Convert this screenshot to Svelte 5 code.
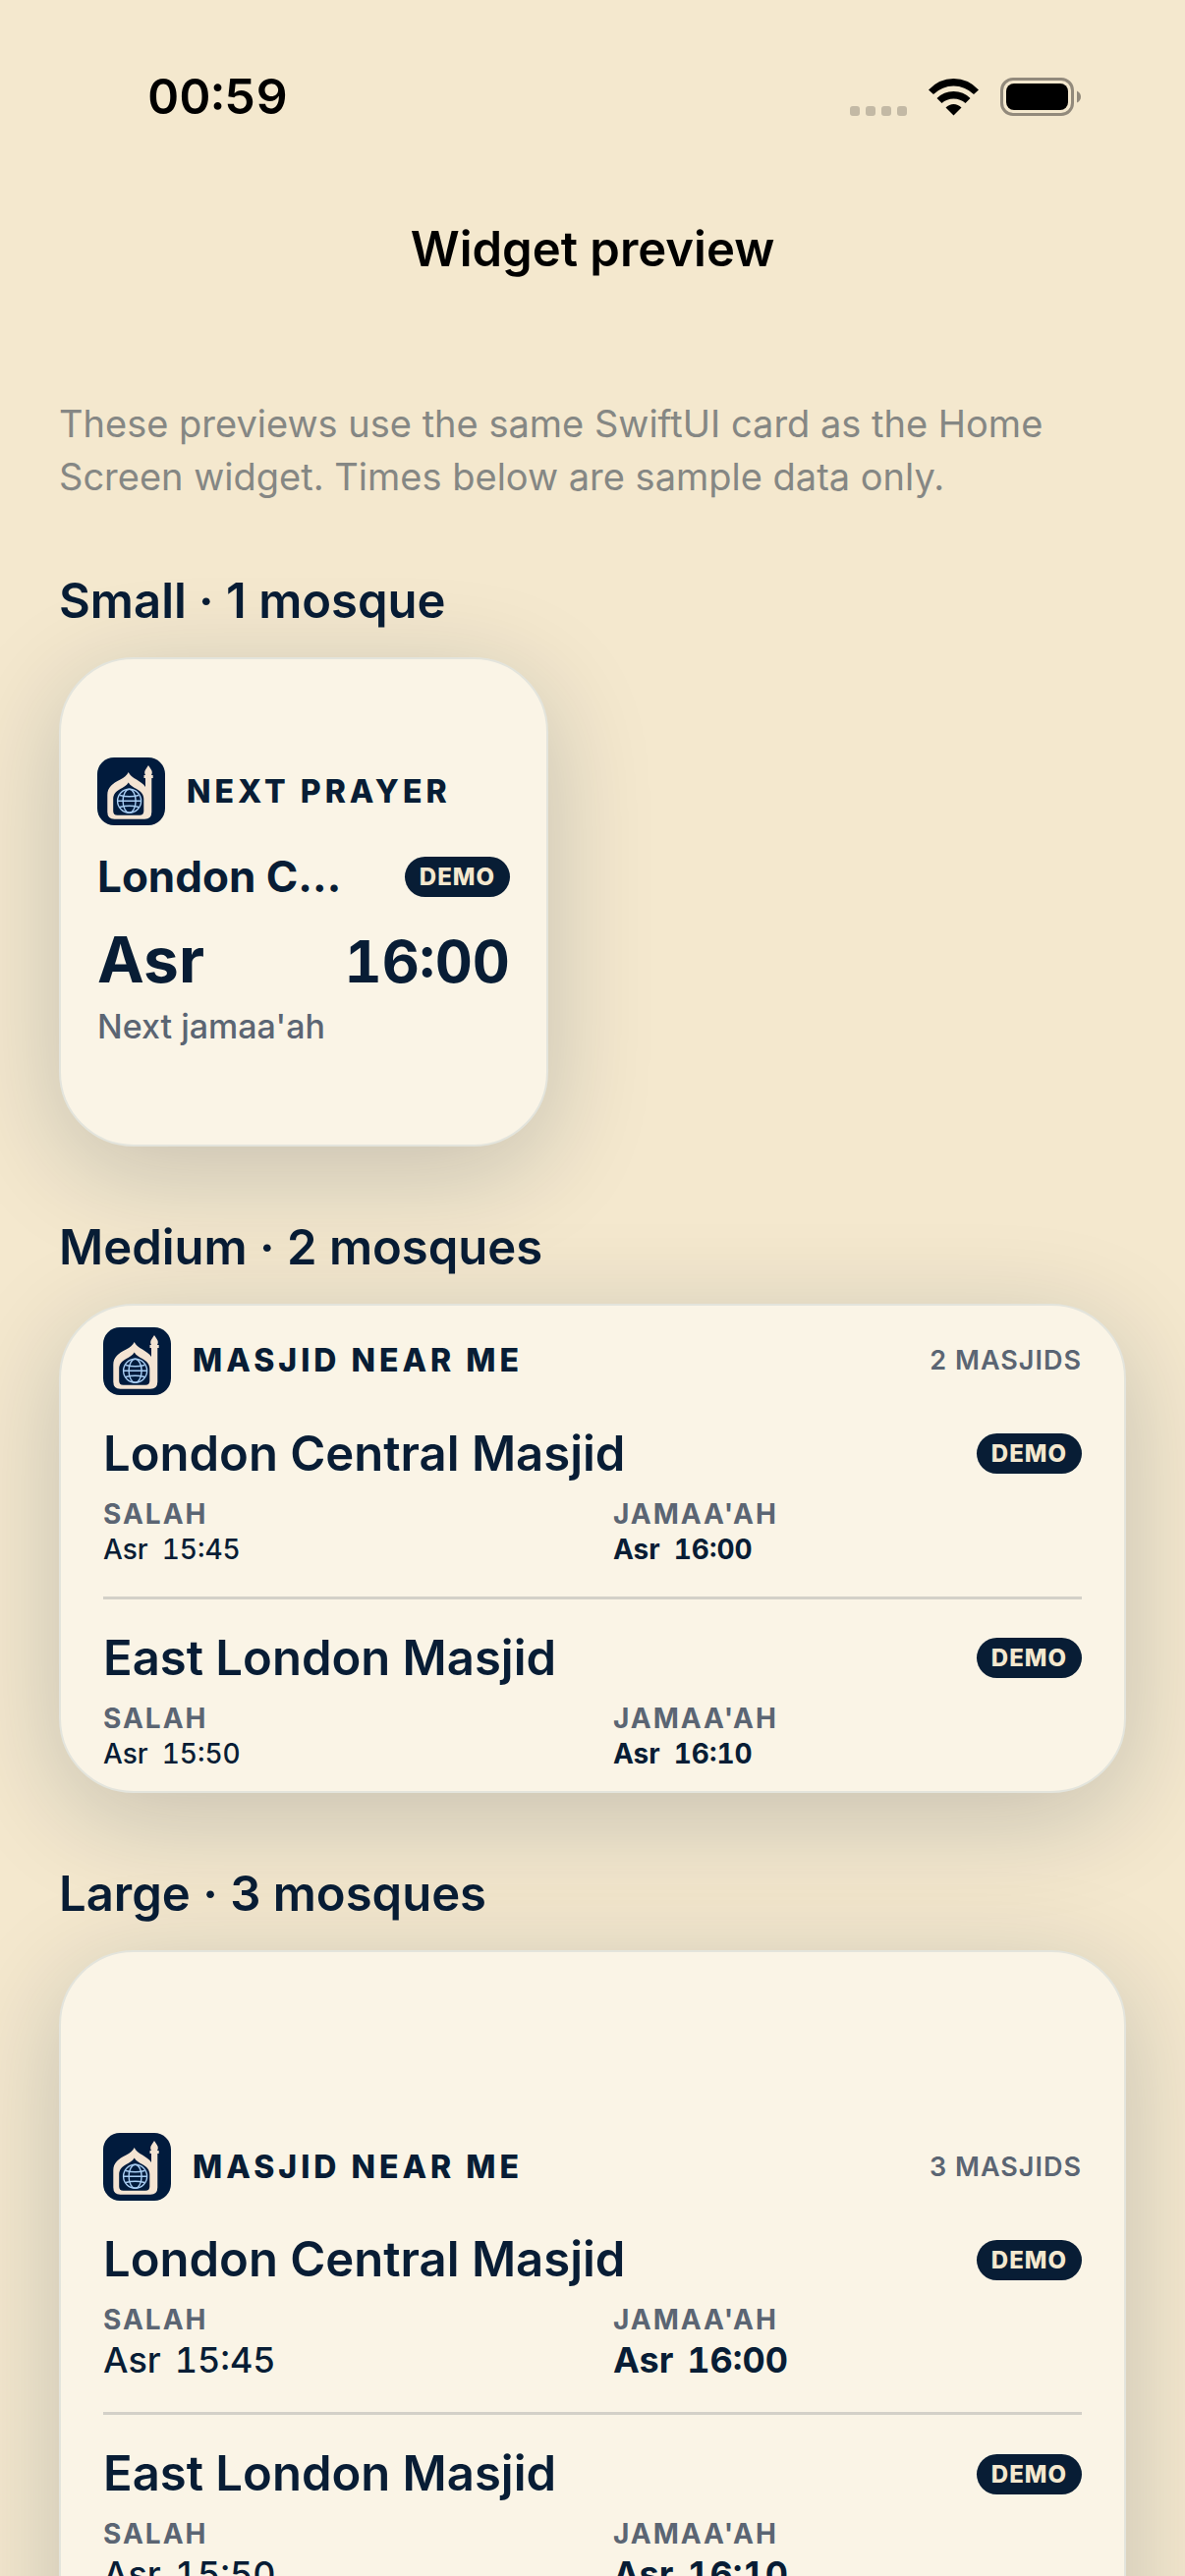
<script lang="ts">
    type Mosque = {
        name: string
        salah: string
        jamaah: string
    }

    type Widget = {
        size: 'medium' | 'large'
        title: string
        count: number
    }

    const prayer = 'Asr'

    const mosques: Mosque[] = [
        { name: 'London Central Masjid', salah: '15:45', jamaah: '16:00' },
        { name: 'East London Masjid', salah: '15:50', jamaah: '16:10' },
    ]

    const widgets: Widget[] = [
        { size: 'medium', title: 'Medium · 2 mosques', count: 2 },
        { size: 'large', title: 'Large · 3 mosques', count: 3 },
    ]
</script>

{#snippet logo()}
    <svg class="logo" viewBox="0 0 69 69" aria-hidden="true">
        <rect width="69" height="69" rx="17" fill="#011b3d" />
        <path
            fill="#f4e4d3"
            fill-rule="evenodd"
            d="M31.7 15c1.5 3.4 4.6 5.2 8.3 7.600 3.500 2.200 7 4.400 9 7.400V21h-1.500v-3H49c-1-1.600-1.200-4 .2-5.800L52 8l2.800 4.200c1.400 1.800 1.200 4.200.2 5.800h1.700v3H55.300v34.500q0 7.200-7.200 7.200H17.500q-7.200 0-7.200-7.200V38c0-7 5-11.500 13.100-15.400 3.700-2.400 6.800-4.200 8.300-7.600zM31.700 25.500c-2 3.500-5 4.500-8.200 6.500-4.500 2.500-7.300 5.500-7.300 10v12.500q0 4.200 4.200 4.200h22.700q4.200 0 4.200-4.200V42c0-4.500-3-7.500-7.400-10-3.200-2-6.200-3-8.200-6.500z"
        />
        <g fill="none" stroke="#a9cdf3" stroke-width="1.4">
            <circle cx="32.6" cy="44.3" r="12" />
            <ellipse cx="32.6" cy="44.3" rx="6.5" ry="12" />
            <path d="M20.6 44.3h24M23 38.5q9.6 2.5 19.2 0M23 50.5q9.600-2.500 19.200 0" />
        </g>
    </svg>
{/snippet}

<div class="screen">
    <div class="status">
        <time>00:59</time>
        <div class="indicators">
            <svg class="cellular" viewBox="0 0 58 10" aria-hidden="true">
                {#each [0, 16, 32, 48] as x}
                    <rect {x} width="10" height="10" rx="3" />
                {/each}
            </svg>
            <svg class="wifi" viewBox="0 0 51 38" aria-hidden="true">
                <path d="M0 11.500Q10.500 0 25.500 0T51 11.500L46 16Q37 7.500 25.500 7.500T5 16z" />
                <path d="M8.500 20Q15.500 13 25.500 13T42.500 20L37.500 25Q32.500 20.500 25.500 20.500T13.500 25z" />
                <path d="M17.500 29.500Q21 26 25.500 26T33.500 29.500L25.500 37.500z" />
            </svg>
            <svg class="battery" viewBox="0 0 82 39" aria-hidden="true">
                <rect class="shell" x="1.500" y="1.500" width="72" height="36" rx="11.500" />
                <rect x="6" y="6" width="63" height="27" rx="8" />
                <path class="cap" d="M78 13.500q4 2 4 6t-4 6z" />
            </svg>
        </div>
    </div>

    <header>
        <h1>Widget preview</h1>
    </header>

    <main>
        <p class="intro">
            These previews use the same SwiftUI card as the Home Screen widget. Times below are
            sample data only.
        </p>

        <section>
            <h2>Small · 1 mosque</h2>
            <article class="card small">
                <div class="brand">
                    {@render logo()}
                    <span class="label">NEXT PRAYER</span>
                </div>
                <div class="mosque">
                    <h3>{mosques[0].name}</h3>
                    <span class="badge">DEMO</span>
                </div>
                <div class="next">
                    <strong>{prayer}</strong>
                    <time>{mosques[0].jamaah}</time>
                </div>
                <p class="caption">Next jamaa'ah</p>
            </article>
        </section>

        {#each widgets as widget}
            <section>
                <h2>{widget.title}</h2>
                <article class="card {widget.size}">
                    <div class="brand">
                        {@render logo()}
                        <span class="label">MASJID NEAR ME</span>
                        <span class="count">{widget.count} MASJIDS</span>
                    </div>
                    {#each mosques as mosque}
                        <div class="entry">
                            <div class="mosque">
                                <h3>{mosque.name}</h3>
                                <span class="badge">DEMO</span>
                            </div>
                            <dl>
                                <div>
                                    <dt>SALAH</dt>
                                    <dd><span>{prayer}</span><time>{mosque.salah}</time></dd>
                                </div>
                                <div class="jamaah">
                                    <dt>JAMAA'AH</dt>
                                    <dd><span>{prayer}</span><time>{mosque.jamaah}</time></dd>
                                </div>
                            </dl>
                        </div>
                    {/each}
                </article>
            </section>
        {/each}
    </main>
</div>

<style>
    :global(body) {
        margin: 0;
        background: #f4e8ce;
    }

    .screen {
        --navy: #081d35;
        --muted: #5b6573;
        height: 100vh;
        overflow-y: auto;
        scrollbar-width: none;
        background: #f4e8ce;
        color: var(--navy);
        font-family: Inter, 'Liberation Sans', sans-serif;
    }

    h1,
    h2,
    h3,
    p,
    dl,
    dd {
        margin: 0;
    }

    time {
        font-variant-numeric: tabular-nums;
    }

    .status {
        display: flex;
        justify-content: space-between;
        align-items: center;
        padding: 68px 106px 0 150px;
        color: #000;

        time {
            font-size: 50px;
            line-height: 60px;
            font-weight: 600;
        }
    }

    .indicators {
        display: flex;
        align-items: flex-end;
        gap: 22px;
    }

    .cellular {
        width: 58px;
        height: 10px;
        fill: #c3b9a5;
    }

    .wifi {
        width: 51px;
        height: 38px;
    }

    .battery {
        width: 82px;
        height: 39px;

        .shell {
            fill: none;
            stroke: #928a7c;
            stroke-width: 3;
        }

        .cap {
            fill: #928a7c;
        }
    }

    header {
        padding: 95px 60px 0;
        text-align: center;
        color: #000;
    }

    h1,
    h2 {
        font-size: 49px;
        line-height: 62px;
        font-weight: 600;
    }

    main {
        padding: 119px 60px;
    }

    .intro {
        margin-bottom: 69px;
        color: #858784;
        font-size: 38px;
        line-height: 54px;
    }

    section {
        display: flex;
        flex-direction: column;
        gap: 26px;
    }

    section + section {
        margin-top: 72px;
    }

    .card {
        box-sizing: border-box;
        display: flex;
        flex-direction: column;
        justify-content: center;
        min-height: 498px;
        padding: 0 43px;
        border: 2px solid #e3e4dc;
        border-radius: 76px;
        background: #faf4e6;
        box-shadow: 0 24px 108px rgba(8, 29, 53, 0.2);
    }

    .small {
        width: 498px;
        padding: 0 37px;

        .brand {
            margin-bottom: 26px;
        }

        h3 {
            font-size: 44px;
            line-height: 52px;
            font-weight: 700;
        }
    }

    .large {
        justify-content: flex-start;
        min-height: 1146px;
        padding-top: 184px;
    }

    .brand {
        display: flex;
        align-items: center;
        gap: 22px;
    }

    .logo {
        flex: none;
        width: 69px;
        height: 69px;
    }

    .label {
        font-size: 32px;
        line-height: 40px;
        font-weight: 800;
        letter-spacing: 4px;
    }

    .count {
        margin-left: auto;
        color: var(--muted);
        font-size: 27px;
        line-height: 32px;
        font-weight: 600;
        letter-spacing: 1px;
    }

    .mosque {
        display: flex;
        justify-content: space-between;
        align-items: center;
        gap: 48px;
    }

    h3 {
        min-width: 0;
        overflow: hidden;
        text-overflow: ellipsis;
        white-space: nowrap;
        font-size: 49px;
        line-height: 60px;
        font-weight: 600;
    }

    .badge {
        flex: none;
        padding: 5px 15px 4px;
        border-radius: 21px;
        background: var(--navy);
        color: #f4e8ce;
        font-size: 24px;
        line-height: 32px;
        font-weight: 800;
        letter-spacing: 1px;
    }

    .next {
        display: flex;
        justify-content: space-between;
        align-items: baseline;
        margin: 20px 0 7px;
        line-height: 78px;
        font-weight: 700;

        strong {
            font-size: 64px;
            font-weight: 700;
        }

        time {
            font-size: 59px;
        }
    }

    .caption {
        color: var(--muted);
        font-size: 34px;
        line-height: 40px;
        font-weight: 500;
    }

    .entry {
        padding-top: 30px;
    }

    .entry + .entry {
        margin-top: 31px;
        border-top: 3px solid #d3d0c8;
    }

    dl {
        display: grid;
        grid-template-columns: 1fr 1fr;
        gap: 42px;
        margin-top: 15px;
    }

    dt {
        margin-bottom: 4px;
        color: var(--muted);
        font-size: 28px;
        line-height: 32px;
        font-weight: 700;
        letter-spacing: 2px;
    }

    dd {
        display: flex;
        gap: 14px;
        font-size: 28px;
        line-height: 33px;
        font-weight: 500;
    }

    .jamaah dd {
        font-weight: 700;
    }

    .large dd {
        font-size: 36px;
        line-height: 43px;
    }
</style>
